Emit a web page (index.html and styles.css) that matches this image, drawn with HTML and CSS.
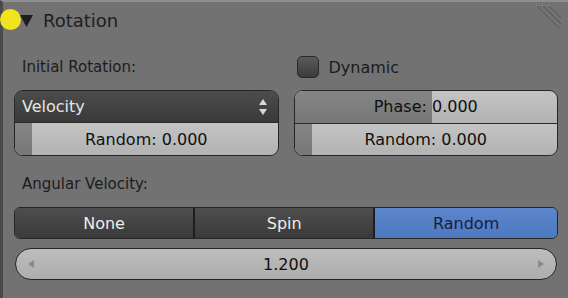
FILE: index.html
```html
<html>

<head>
  <link rel="stylesheet" href="styles.css">
</head>

<body>
  <div class="panel">
    <div class="header">
      <span class="cursor-dot"></span>
      <svg class="caret" width="13" height="12" viewBox="0 0 13 12"><polygon points="0,0 13,0 6.5,12" fill="#1e1e1e"/></svg>
      <span class="title">Rotation</span>
      <svg class="grip" width="30" height="30" viewBox="0 0 30 30">
        <line x1="4" y1="2" x2="26" y2="24" stroke="#9a9a9a" stroke-width="1"/>
        <line x1="5" y1="3" x2="27" y2="25" stroke="#555" stroke-width="1"/>
        <line x1="10" y1="2" x2="28" y2="20" stroke="#9a9a9a" stroke-width="1"/>
        <line x1="11" y1="3" x2="29" y2="21" stroke="#555" stroke-width="1"/>
        <line x1="16" y1="2" x2="28" y2="14" stroke="#9a9a9a" stroke-width="1"/>
        <line x1="17" y1="3" x2="29" y2="15" stroke="#555" stroke-width="1"/>
      </svg>
    </div>

    <div class="columns">
      <div class="col">
        <div class="label">Initial Rotation:</div>
        <div class="stack">
          <div class="dropdown">
            <span>Velocity</span>
            <svg width="10" height="18" viewBox="0 0 10 18"><polygon points="5,1 9,7 1,7" fill="#d8d8d8"/><polygon points="1,11 9,11 5,17" fill="#d8d8d8"/></svg>
          </div>
          <div class="slider bottom">
            <div class="fill" style="width: 17px"></div>
            <span>Random: 0.000</span>
          </div>
        </div>
      </div>
      <div class="col">
        <div class="label check-row">
          <span class="checkbox"></span>
          <span>Dynamic</span>
        </div>
        <div class="stack">
          <div class="slider top">
            <div class="fill" style="width: 137px"></div>
            <span>Phase: 0.000</span>
          </div>
          <div class="slider bottom">
            <div class="fill" style="width: 17px"></div>
            <span>Random: 0.000</span>
          </div>
        </div>
      </div>
    </div>

    <div class="label wide">Angular Velocity:</div>
    <div class="segments">
      <div class="seg">None</div>
      <div class="seg">Spin</div>
      <div class="seg active">Random</div>
    </div>
    <div class="number">
      <svg width="6" height="8" viewBox="0 0 6 8"><polygon points="6,0 6,8 0,4" fill="#8a8a8a"/></svg>
      <span>1.200</span>
      <svg width="6" height="8" viewBox="0 0 6 8"><polygon points="0,0 0,8 6,4" fill="#8a8a8a"/></svg>
    </div>
  </div>
</body>

</html>
```

FILE: styles.css
```css
body {
  margin: 0;
  background-color: #727272;
  font-family: "DejaVu Sans", sans-serif;
  overflow: hidden;
}

.panel {
  position: relative;
  width: 565px;
  height: 296px;
  border-left: 3px solid #4a4a4a;
  border-top: 2px solid #8e8e8e;
  background-color: #727272;
}

.header {
  position: relative;
  display: flex;
  align-items: center;
  height: 36px;
  padding-left: 17px;
}

.cursor-dot {
  position: absolute;
  left: -3px;
  top: 7px;
  width: 21px;
  height: 21px;
  border-radius: 50%;
  background-color: #f2e41c;
}

.caret {
  position: relative;
  margin-top: 1px;
}

.title {
  margin-left: 10px;
  font-size: 18px;
  color: #1e1e1e;
}

.grip {
  position: absolute;
  right: 6px;
  top: 1px;
}

.columns {
  display: flex;
  gap: 15px;
  padding: 0 10px 0 11px;
}

.col {
  flex: 1;
  display: flex;
  flex-direction: column;
}

.label {
  height: 46px;
  padding-top: 6px;
  display: flex;
  align-items: center;
  padding-left: 8px;
  font-size: 15px;
  color: #1c1c1c;
}

.check-row {
  padding-left: 3px;
  gap: 10px;
  font-size: 16px;
}

.checkbox {
  width: 20px;
  height: 20px;
  border-radius: 5px;
  border: 1px solid #2a2a2a;
  background: linear-gradient(#5a5a5a, #3c3c3c);
}

.stack {
  height: 64px;
  display: flex;
  flex-direction: column;
  border: 1px solid #262626;
  border-radius: 9px;
  overflow: hidden;
}

.dropdown {
  height: 31px;
  display: flex;
  align-items: center;
  justify-content: space-between;
  padding: 0 10px 0 7px;
  background: linear-gradient(#4c4c4c, #3a3a3a);
  border-bottom: 1px solid #2a2a2a;
  color: #e6e6e6;
  font-size: 16px;
}

.slider {
  position: relative;
  flex: 1;
  display: flex;
  align-items: center;
  justify-content: center;
  background: linear-gradient(#c4c4c4, #b2b2b2);
  color: #101010;
  font-size: 16px;
}

.slider.top {
  border-bottom: 1px solid #2a2a2a;
}

.fill {
  position: absolute;
  left: 0;
  top: 0;
  bottom: 0;
  background: linear-gradient(#858585, #777777);
}

.slider span {
  position: relative;
}

.wide {
  height: 47px;
  padding-top: 4px;
  margin-left: 11px;
}

.segments {
  display: flex;
  height: 30px;
  margin: 0 10px 0 11px;
  border: 1px solid #262626;
  border-radius: 6px;
  overflow: hidden;
}

.seg {
  flex: 1;
  display: flex;
  align-items: center;
  justify-content: center;
  background: linear-gradient(#4e4e4e, #3a3a3a);
  color: #ececec;
  font-size: 16px;
}

.seg + .seg {
  border-left: 2px solid #1e1e1e;
}

.seg.active {
  flex: 1.02;
  background: linear-gradient(#5b86cc, #4e79c0);
  color: #17203a;
}

.number {
  display: flex;
  align-items: center;
  justify-content: space-between;
  height: 30px;
  margin: 9px 11px 0 12px;
  padding: 0 12px;
  border: 1px solid #262626;
  border-radius: 16px;
  background: linear-gradient(#bdbdbd, #adadad);
  color: #101010;
  font-size: 16px;
}
```
